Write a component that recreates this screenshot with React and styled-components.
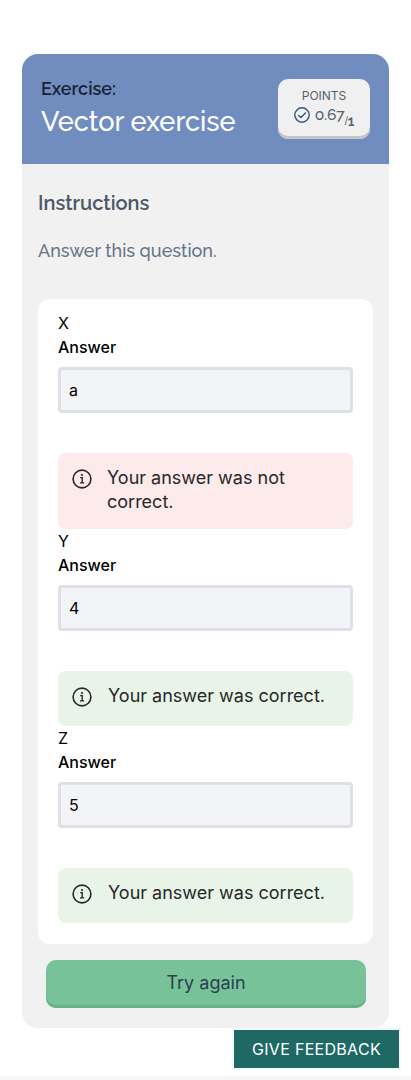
import React from "react";
import styled, { createGlobalStyle } from "styled-components";

const heading = `Raleway, Lato, "Open Sans", sans-serif`;

const Global = createGlobalStyle`
  *, *::before, *::after { box-sizing: border-box; }
  body {
    margin: 0;
    background: #fff;
    color: #000;
    font-family: Inter, "Liberation Sans", sans-serif;
    font-size: 16px;
    line-height: 24px;
  }
  h1, h2, p { margin: 0; }
`;

const Page = styled.div`
  position: relative;
  height: 1080px;
  padding: 54px 22px 0;
  overflow: hidden;
  display: flex;
  flex-direction: column;
`;

const Exercise = styled.section`
  height: 974px;
  flex: none;
  border-radius: 16px;
  background: #f1f1f1;
  overflow: hidden;
`;

const Header = styled.header`
  height: 110px;
  padding: 25px 19px;
  display: flex;
  justify-content: space-between;
  align-items: flex-start;
  background: #718dbf;
`;

const Title = styled.h1`
  font-family: ${heading};
  font-weight: 500;
  font-size: 27.2px;
  line-height: 36px;
  color: #fff;
  white-space: nowrap;
`;

const Kicker = styled.span`
  display: block;
  margin-bottom: 4px;
  font-size: 18px;
  font-weight: 600;
  line-height: 20px;
  color: #1a2333;
`;

const Points = styled.div`
  width: 92px;
  height: 60px;
  padding-top: 8px;
  border-radius: 10px;
  background: #f0f0f0;
  box-shadow: inset 0 -3px 0 #c4c4c4;
  color: #57606f;
  text-align: center;
`;

const PointsLabel = styled.div`
  font-size: 12px;
  line-height: 18px;
`;

const Score = styled.div`
  display: flex;
  justify-content: center;
  align-items: center;
  gap: 5px;
  height: 20px;
  font-family: ${heading};
  font-size: 15.6px;
  font-weight: 500;
  letter-spacing: -0.2px;
  line-height: 20px;
  svg { flex: none; }
`;

const Maximum = styled.sub`
  font-size: 14px;
  font-weight: 600;
  line-height: 0;
  vertical-align: -6px;
  letter-spacing: -0.2px;
`;

const Slash = styled.span`
  position: relative;
  top: -2px;
  font-family: Inter, "Liberation Sans", sans-serif;
  font-size: 10px;
  font-weight: 400;
`;

const Instructions = styled.div`
  padding: 27px 16px 0;
  font-family: ${heading};
`;

const SectionTitle = styled.h2`
  font-size: 20px;
  font-weight: 600;
  line-height: 24px;
  color: #4c5868;
`;

const Lead = styled.p`
  margin-top: 24px;
  font-size: 18px;
  font-weight: 500;
  line-height: 24px;
  color: #687486;
`;

const Answers = styled.div`
  margin: 36px 16px 0;
  height: 645px;
  padding: 12px 20px 0;
  border-radius: 12px;
  background: #fff;
`;

const Label = styled.label`
  display: block;
  font-weight: 500;
`;

const Input = styled.input`
  display: block;
  width: 100%;
  height: 46px;
  margin-top: 8px;
  padding: 0 8px;
  border: 3px solid #dfe0e7;
  border-radius: 4px;
  background: #f3f4f6;
  color: #000;
  font: inherit;
  font-weight: 400;
  outline: none;
`;

const Feedback = styled.div`
  display: flex;
  min-height: ${(p) => (p.$correct ? 55 : 76)}px;
  margin-top: 40px;
  padding: 13px 14px 0;
  gap: ${(p) => (p.$correct ? 16 : 15)}px;
  border-radius: 8px;
  background: ${(p) => (p.$correct ? "#e9f4e9" : "#fdeaea")};
  color: #282828;
  font-size: 18px;
  svg { flex: none; margin-top: 3px; }
`;

const TryAgain = styled.button`
  display: block;
  width: 320px;
  height: 48px;
  margin: 16px 0 0 24px;
  padding: 0 0 3px;
  border: 0;
  border-radius: 10px;
  background: #78c299;
  box-shadow: inset 0 -3px 0 #68b088;
  color: #2f4051;
  font: inherit;
  font-size: 18px;
`;

const GiveFeedback = styled.button`
  position: absolute;
  right: 12px;
  top: 1030px;
  width: 165px;
  height: 38px;
  padding: 0;
  border: 0;
  background: #1f6964;
  box-shadow: 0 0 0 2px #f5f7f9;
  color: #fff;
  font: inherit;
  letter-spacing: 0.3px;
`;

const FooterEdge = styled.footer`
  margin: auto -22px 0;
  height: 4px;
  flex: none;
  background: #f5f6f7;
`;

const InfoIcon = () => (
  <svg width="20" height="20" viewBox="0 0 20 20" fill="none" stroke="#282828">
    <circle cx="10" cy="10" r="8.9" strokeWidth="1.6" />
    <path d="M8.1 8.6h2.1v5.1M8 13.9h4.2" strokeWidth="1.4" />
    <circle cx="10" cy="6" r="1.1" fill="#282828" stroke="none" />
  </svg>
);

const CheckIcon = () => (
  <svg width="16" height="16" viewBox="0 0 16 16" fill="none" stroke="#365382" strokeWidth="1.4" strokeLinecap="round" strokeLinejoin="round">
    <circle cx="8" cy="8" r="7.2" />
    <path d="M4.7 8.4 7 10.5l4.4-4.6" />
  </svg>
);

const fields = [
  { name: "X", value: "a", correct: false },
  { name: "Y", value: "4", correct: true },
  { name: "Z", value: "5", correct: true },
];

export default function App() {
  return (
    <Page>
      <Global />
      <Exercise>
        <Header>
          <Title>
            <Kicker>Exercise:</Kicker>
            Vector exercise
          </Title>
          <Points>
            <PointsLabel>POINTS</PointsLabel>
            <Score>
              <CheckIcon />
              <span>
                0.67
                <Maximum><Slash>/</Slash>1</Maximum>
              </span>
            </Score>
          </Points>
        </Header>
        <Instructions>
          <SectionTitle>Instructions</SectionTitle>
          <Lead>Answer this question.</Lead>
        </Instructions>
        <Answers>
          {fields.map(({ name, value, correct }) => (
            <div key={name}>
              <div>{name}</div>
              <Label>
                Answer
                <Input defaultValue={value} />
              </Label>
              <Feedback $correct={correct}>
                <InfoIcon />
                <span>{correct ? "Your answer was correct." : "Your answer was not correct."}</span>
              </Feedback>
            </div>
          ))}
        </Answers>
        <TryAgain>Try again</TryAgain>
      </Exercise>
      <GiveFeedback>GIVE FEEDBACK</GiveFeedback>
      <FooterEdge />
    </Page>
  );
}
